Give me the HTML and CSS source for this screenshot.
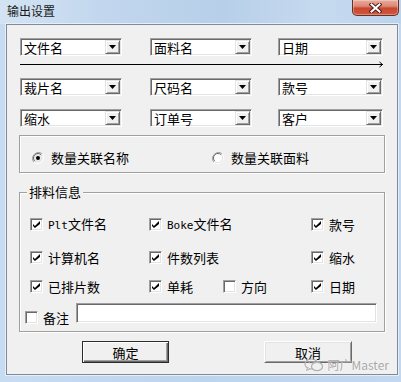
FILE: index.html
```html
<!DOCTYPE html>
<html>
<head>
<meta charset="utf-8">
<link rel="stylesheet" href="styles.css">
</head>
<body>
<div class="window">
  <div class="titlebar">
    <span class="title">输出设置</span>
    <div class="close">
      <svg width="13" height="10" viewBox="0 0 13 10">
        <path d="M2.5 1.5 L10.5 8.5 M10.5 1.5 L2.5 8.5" stroke="#4a1e18" stroke-width="4" stroke-linecap="square"/>
        <path d="M2.5 1.5 L10.5 8.5 M10.5 1.5 L2.5 8.5" stroke="#fff" stroke-width="2" stroke-linecap="square"/>
      </svg>
    </div>
  </div>
  <div class="client">
    <div class="combos">
      <div class="combo"><span class="combo-text">文件名</span><span class="drop"></span></div>
      <div class="combo"><span class="combo-text">面料名</span><span class="drop"></span></div>
      <div class="combo wide"><span class="combo-text">日期</span><span class="drop"></span></div>
    </div>
    <div class="arrow">
      <svg width="364" height="9" viewBox="0 0 364 9">
        <path d="M0 4.5 H363" stroke="#000" stroke-width="1"/>
        <path d="M359.5 2 L362.5 4.5 L359.5 7" stroke="#000" stroke-width="1" fill="none"/>
      </svg>
    </div>
    <div class="combos r2">
      <div class="combo"><span class="combo-text">裁片名</span><span class="drop"></span></div>
      <div class="combo"><span class="combo-text">尺码名</span><span class="drop"></span></div>
      <div class="combo wide"><span class="combo-text">款号</span><span class="drop"></span></div>
    </div>
    <div class="combos r3">
      <div class="combo"><span class="combo-text">缩水</span><span class="drop"></span></div>
      <div class="combo"><span class="combo-text">订单号</span><span class="drop"></span></div>
      <div class="combo wide"><span class="combo-text">客户</span><span class="drop"></span></div>
    </div>

    <div class="radio-group">
      <label class="radio">
        <svg width="12" height="12" viewBox="0 0 12 12">
          <path d="M10.2 1.8 A6 6 0 0 0 1.8 10.2" fill="none" stroke="#a0a0a0" stroke-width="1"/>
          <path d="M1.8 10.2 A6 6 0 0 0 10.2 1.8" fill="none" stroke="#ffffff" stroke-width="1"/>
          <circle cx="6" cy="6" r="4.5" fill="#e8e8e8"/>
          <path d="M9.2 2.8 A4.5 4.5 0 0 0 2.8 9.2" fill="none" stroke="#696969" stroke-width="1"/>
          <circle cx="6" cy="6" r="2" fill="#000"/>
        </svg>
        <span>数量关联名称</span>
      </label>
      <label class="radio">
        <svg width="12" height="12" viewBox="0 0 12 12">
          <path d="M10.2 1.8 A6 6 0 0 0 1.8 10.2" fill="none" stroke="#a0a0a0" stroke-width="1"/>
          <path d="M1.8 10.2 A6 6 0 0 0 10.2 1.8" fill="none" stroke="#ffffff" stroke-width="1"/>
          <circle cx="6" cy="6" r="4.5" fill="#fff"/>
          <path d="M9.2 2.8 A4.5 4.5 0 0 0 2.8 9.2" fill="none" stroke="#696969" stroke-width="1"/>
          <path d="M2.8 9.2 A4.5 4.5 0 0 0 9.2 2.8" fill="none" stroke="#e3e3e3" stroke-width="1"/>
        </svg>
        <span>数量关联面料</span>
      </label>
    </div>

    <div class="group">
      <div class="legend">排料信息</div>
      <div class="cbrow first">
        <label class="cb c1"><span class="box on"></span><span><span class="latin">Plt</span>文件名</span></label>
        <label class="cb c2w"><span class="box on"></span><span><span class="latin">Boke</span>文件名</span></label>
        <label class="cb c4"><span class="box on"></span><span>款号</span></label>
      </div>
      <div class="cbrow second">
        <label class="cb c1"><span class="box on"></span><span>计算机名</span></label>
        <label class="cb c2w"><span class="box on"></span><span>件数列表</span></label>
        <label class="cb c4"><span class="box on"></span><span>缩水</span></label>
      </div>
      <div class="cbrow third">
        <label class="cb c1"><span class="box on"></span><span>已排片数</span></label>
        <label class="cb c2"><span class="box on"></span><span>单耗</span></label>
        <label class="cb c3"><span class="box"></span><span>方向</span></label>
        <label class="cb c4"><span class="box on"></span><span>日期</span></label>
      </div>
      <div class="note">
        <label class="cb note-cb"><span class="box"></span><span>备注</span></label>
        <div class="textbox"></div>
      </div>
    </div>

    <div class="buttons">
      <div class="btn default"><span>确定</span></div>
      <div class="btn cancel"><span>取消</span></div>
    </div>

    <div class="watermark">
      <svg width="20" height="14" viewBox="0 0 20 14">
        <ellipse cx="7.5" cy="6" rx="6.5" ry="5" fill="none" stroke="#b0b0b0" stroke-width="1.2"/>
        <path d="M3.5 10 L2.5 12.5 L6 10.8" fill="#f0f0f0" stroke="#b0b0b0" stroke-width="1"/>
        <ellipse cx="13" cy="8.5" rx="5.5" ry="4.2" fill="#f0f0f0" stroke="#b0b0b0" stroke-width="1.2"/>
        <circle cx="5.3" cy="4.8" r="0.8" fill="#b0b0b0"/>
        <circle cx="9.3" cy="4.8" r="0.8" fill="#b0b0b0"/>
      </svg>
      <span>阿广Master</span>
    </div>
  </div>
</div>
</body>
</html>
```

FILE: styles.css
```css
html, body {
  margin: 0;
  padding: 0;
}
body {
  width: 401px;
  height: 382px;
  overflow: hidden;
  font-family: "Noto Sans CJK SC", "Liberation Sans", sans-serif;
  font-size: 13px;
  color: #000;
}
.window {
  width: 401px;
  height: 382px;
  background: linear-gradient(90deg, #c8dcf1 0%, #bed4ec 50%, #c3d8ee 100%);
  display: flex;
  flex-direction: column;
  position: relative;
}
.titlebar {
  height: 24px;
  flex: none;
  display: flex;
  align-items: flex-start;
  background: linear-gradient(90deg, #d3e3f3 0%, #c2d7ee 25%, #b7cfe9 55%, #c6daef 80%, #bcd3ec 100%);
}
.title {
  margin: 3px 0 0 7px;
  line-height: 16px;
  font-size: 12px;
  color: #1a1a1a;
}
.close {
  margin-left: auto;
  margin-right: 2px;
  width: 47px;
  height: 16px;
  box-sizing: border-box;
  border: 1px solid #6e2d24;
  border-top: none;
  border-radius: 0 0 5px 5px;
  background: linear-gradient(#e9aa9b 0%, #de8a78 40%, #c9472f 55%, #cd5a3f 100%);
  box-shadow: inset 0 0 0 1px rgba(255, 255, 255, 0.3);
  display: flex;
  align-items: center;
  justify-content: center;
}
.client {
  margin: 0 3px 7px 6px;
  flex: 1;
  background: #f0f0f0;
  border: 1px solid #7d8b9c;
  box-shadow: 0 0 0 1px #e6eff8;
  position: relative;
}

/* combos */
.combos {
  display: grid;
  grid-template-columns: 130px 128px 105px;
  margin: 13px 0 0 13px;
}
.combos.r2 { margin-top: 9px; }
.combos.r3 { margin-top: 13px; }
.combo {
  width: 102px;
  height: 18px;
  box-sizing: border-box;
  background: #fff;
  border: 1px solid;
  border-color: #a0a0a0 #fff #fff #a0a0a0;
  box-shadow: inset 1px 1px #696969, inset -1px -1px #e3e3e3;
  padding: 1px;
  display: flex;
}
.combo.wide { width: 105px; }
.combo-text {
  flex: 1;
  padding-left: 2px;
  line-height: 15px;
  white-space: nowrap;
}
.drop {
  width: 15px;
  height: 14px;
  box-sizing: border-box;
  background: #f0f0f0;
  border: 1px solid;
  border-color: #e3e3e3 #696969 #696969 #e3e3e3;
  box-shadow: inset 1px 1px #fff, inset -1px -1px #a0a0a0;
  display: flex;
  align-items: center;
  justify-content: center;
}
.drop::after {
  content: "";
  width: 7px;
  height: 4px;
  background: #000;
  clip-path: polygon(0 0, 100% 0, 50% 100%);
}
.arrow {
  margin: 4px 0 0 13px;
  height: 9px;
  line-height: 0;
}

/* radio group */
.radio-group {
  margin: 8px 0 0 12px;
  width: 366px;
  height: 38px;
  box-sizing: border-box;
  border: 1px solid #a0a0a0;
  box-shadow: inset 1px 1px #fff, 1px 1px #fff;
  display: grid;
  grid-template-columns: 180px auto;
  align-items: center;
  padding: 7px 0 0 12px;
}
.radio {
  display: flex;
  align-items: center;
  gap: 7px;
}

/* group */
.group {
  margin: 19px 0 0 12px;
  width: 366px;
  box-sizing: border-box;
  border: 1px solid #a0a0a0;
  box-shadow: inset 1px 1px #fff, 1px 1px #fff;
  padding-bottom: 8px;
}
.legend {
  width: max-content;
  margin: -9px 0 0 7px;
  padding: 0 2px;
  height: 16px;
  line-height: 16px;
  background: #f0f0f0;
}
.cbrow {
  display: grid;
  grid-template-columns: 119px 74px 88px auto;
  padding-left: 10px;
  height: 13px;
}
.cbrow.first { margin-top: 17px; }
.cbrow.second { margin-top: 21px; }
.cbrow.third { margin-top: 16px; }
.cb {
  display: flex;
  align-items: center;
  gap: 5px;
  white-space: nowrap;
  line-height: 13px;
}
.c1 { grid-column: 1; }
.c2 { grid-column: 2; }
.c2w { grid-column: 2 / 4; }
.c3 { grid-column: 3; }
.c4 { grid-column: 4; }
.latin {
  font-family: "DejaVu Sans Mono", monospace;
  font-size: 11px;
}
.box {
  width: 13px;
  height: 13px;
  flex: none;
  box-sizing: border-box;
  background: #fff;
  border: 1px solid;
  border-color: #a0a0a0 #fff #fff #a0a0a0;
  box-shadow: inset 1px 1px #696969, inset -1px -1px #e3e3e3;
  position: relative;
}
.box.on::after {
  content: "";
  position: absolute;
  left: 2px;
  top: 2px;
  width: 7px;
  height: 7px;
  background: #000;
  clip-path: polygon(0 43%, 28% 71%, 100% 0, 100% 43%, 28% 100%, 0 71%);
}
.note {
  margin-top: 10px;
  display: flex;
  align-items: flex-start;
  height: 20px;
  padding: 0 7px 0 5px;
}
.note-cb {
  margin-top: 8px;
}
.textbox {
  margin-left: auto;
  width: 301px;
  height: 20px;
  box-sizing: border-box;
  background: #fff;
  border: 1px solid;
  border-color: #a0a0a0 #fff #fff #a0a0a0;
  box-shadow: inset 1px 1px #696969, inset -1px -1px #e3e3e3;
}

/* buttons */
.buttons {
  display: flex;
  margin: 9px 0 0 75px;
}
.btn {
  height: 22px;
  box-sizing: border-box;
  background: #f0f0f0;
  display: flex;
  align-items: center;
  justify-content: center;
  border: 1px solid;
  border-color: #fff #696969 #696969 #fff;
  box-shadow: inset 1px 1px #e3e3e3, inset -1px -1px #a0a0a0;
}
.btn.default {
  width: 87px;
  border: 1px solid #2b2b2b;
  box-shadow: inset 1px 1px #fff, inset -1px -1px #696969, inset -2px -2px #a0a0a0;
}
.btn.cancel {
  width: 88px;
  margin-left: 95px;
}

/* watermark overlay */
.watermark {
  position: absolute;
  right: 8px;
  bottom: 2px;
  display: flex;
  align-items: center;
  gap: 3px;
  color: #a8a8a8;
  font-size: 12px;
  line-height: 14px;
  text-shadow: 0 0 2px #fff;
}
```
